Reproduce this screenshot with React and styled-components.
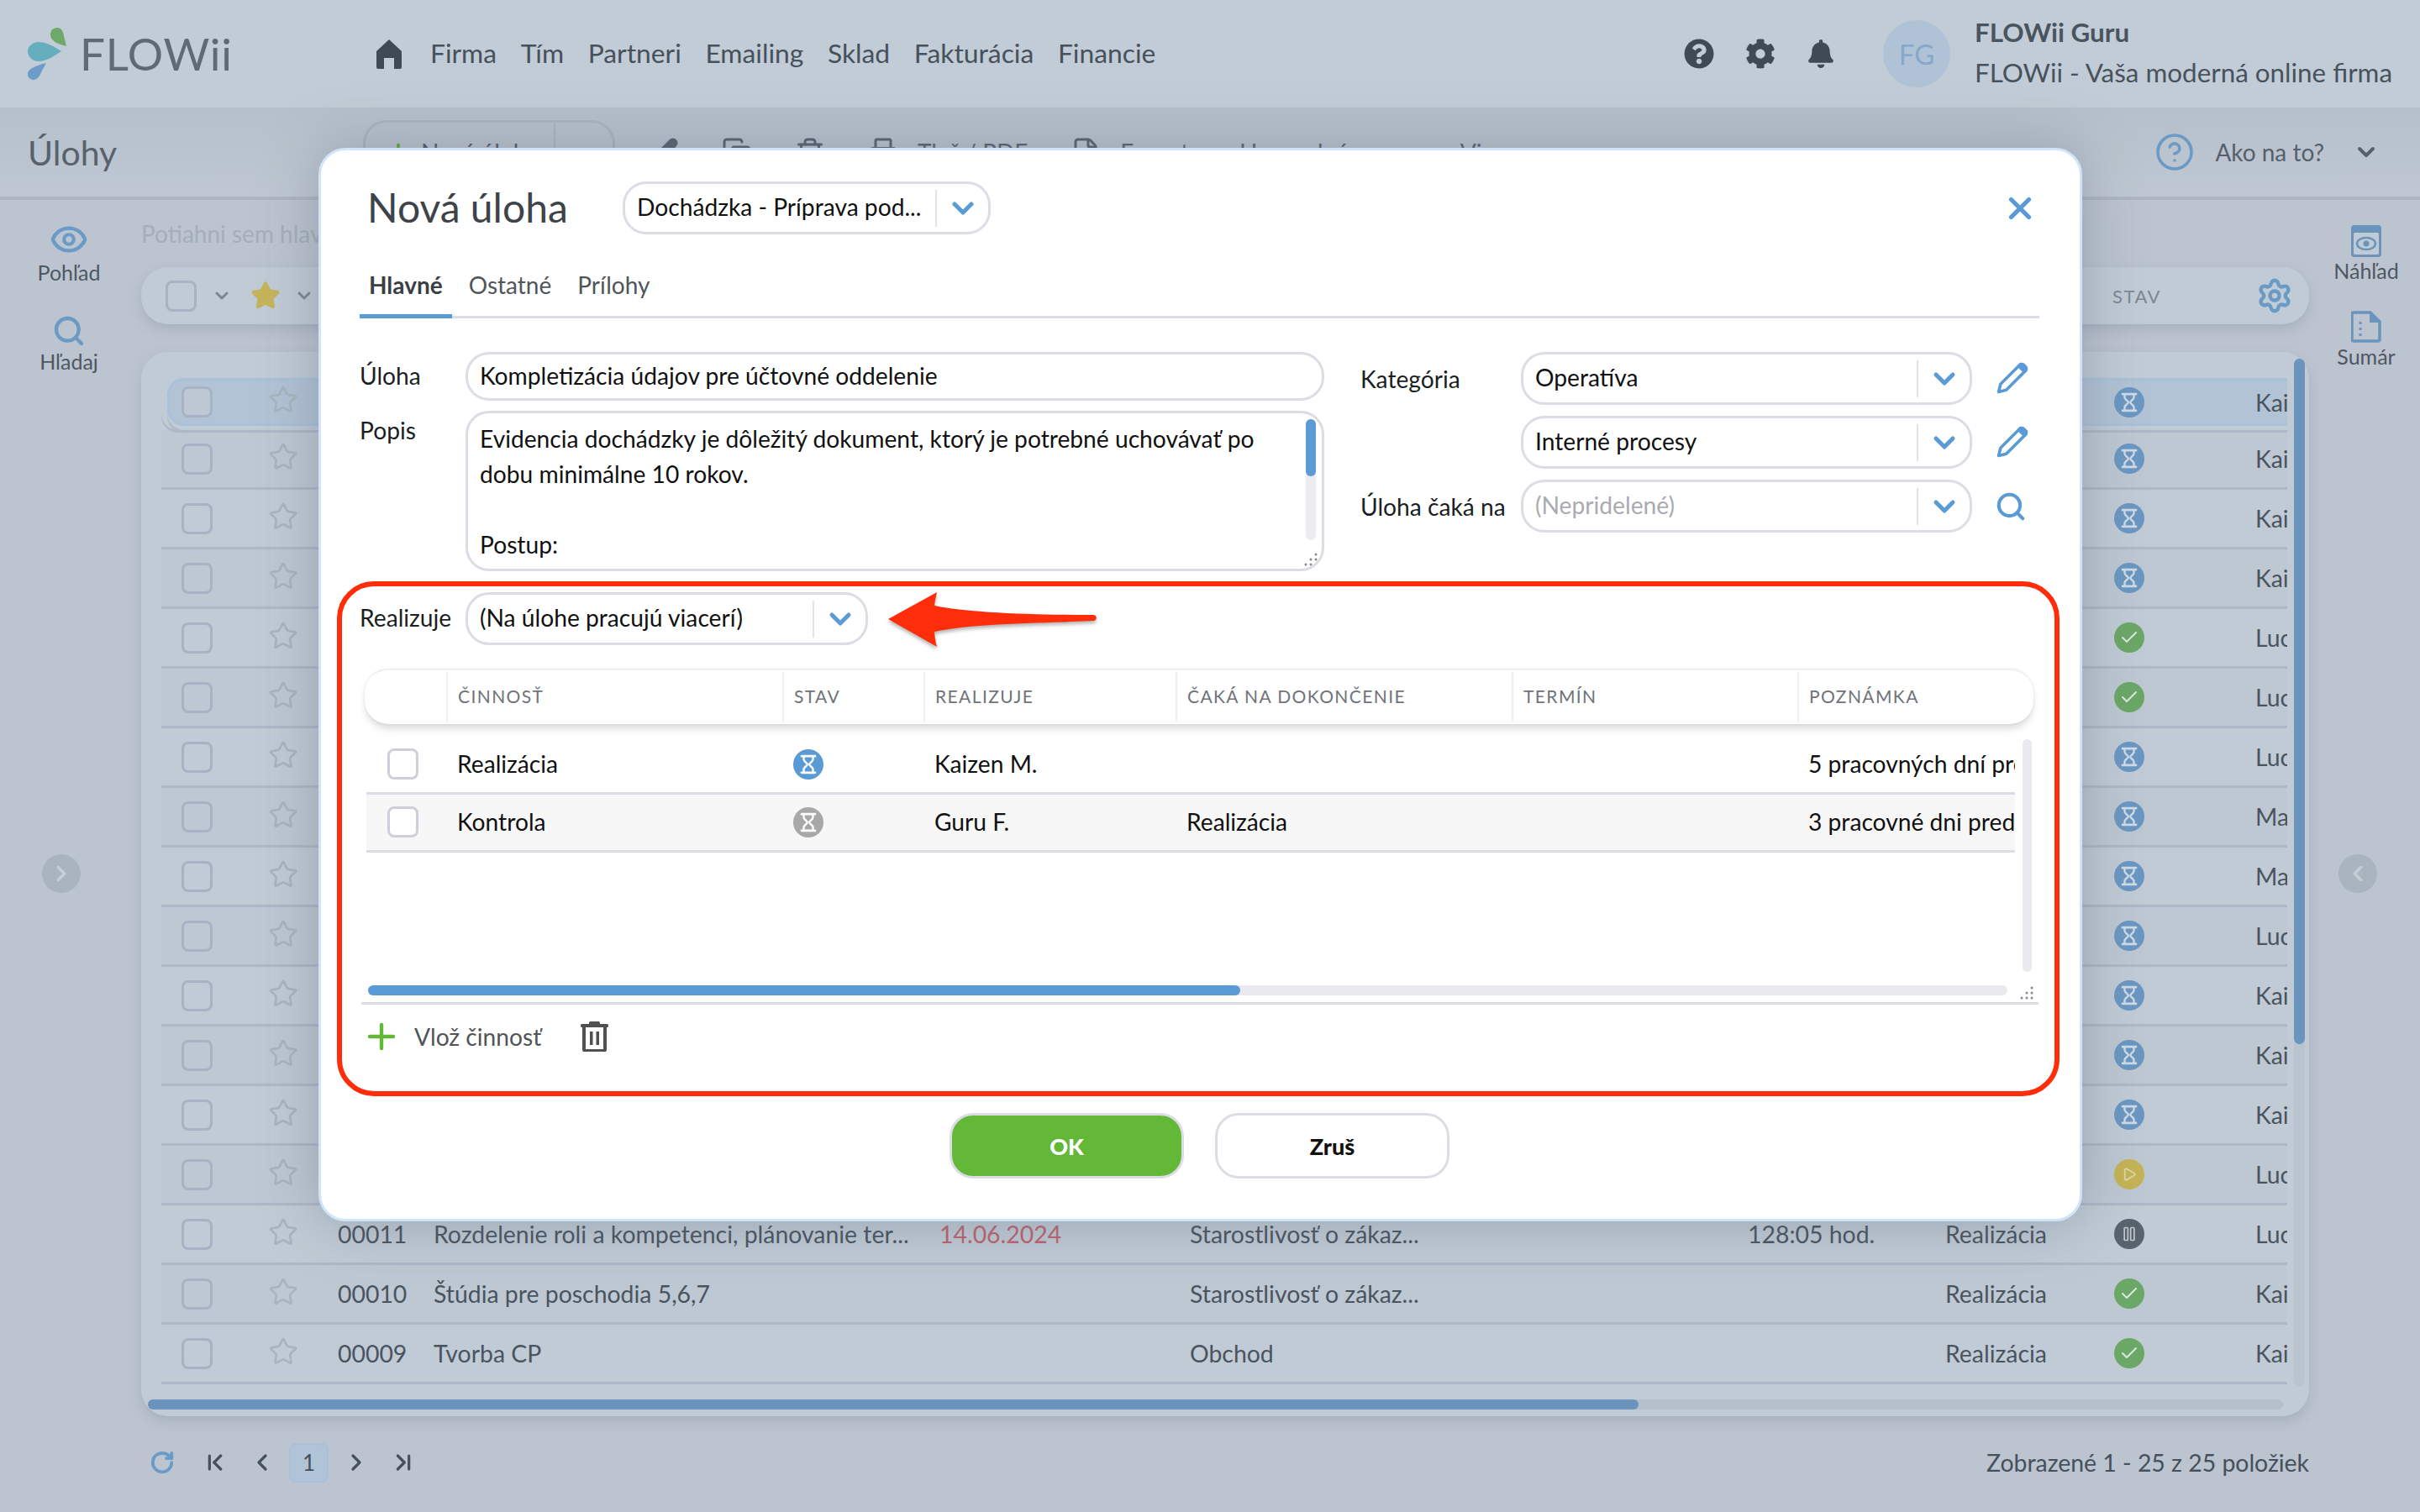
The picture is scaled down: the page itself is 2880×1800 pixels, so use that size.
import React from 'react';
import styled, { createGlobalStyle } from 'styled-components';
import { Eye, Search, Star, ChevronDown, ChevronLeft, ChevronRight, ChevronFirst, ChevronLast, RotateCw, Pencil, X, Plus, Check, Pause, Play, Copy, Trash2, Printer, File, Settings, HelpCircle } from 'lucide-react';
import { FaCog, FaBell, FaQuestionCircle } from 'react-icons/fa';

const FONT = '"Lato", "Noto Sans", sans-serif';

const Global = createGlobalStyle`
  html, body { margin: 0; padding: 0; background: #bdc5d0; }
  * { box-sizing: border-box; }
  body { font-family: ${FONT}; font-size: 29px; }
`;

const Page = styled.div`
  position: relative; width: 2880px; height: 1800px; overflow: hidden;
  background: #bcc4d0; color: #48525d; display: flex; flex-direction: column;
`;
const Header = styled.header`
  height: 128px; flex: none; display: flex; align-items: center; background: #c1ccd6; padding-left: 32px;
`;
const LogoWrap = styled.div`display: flex; align-items: center; width: 415px; gap: 13px;`;
const LogoText = styled.span`font-size: 53px; letter-spacing: 0.7px; color: #5f6a74; line-height: 1; margin-top: -2px;`;
const HomeIcon = styled.svg`width: 32px; height: 36px; fill: #3f4a54; margin-right: 33px;`;
const Nav = styled.nav`display: flex; gap: 28.6px; font-size: 31.8px; color: #47515b; padding-bottom: 3px;`;
const HeadRight = styled.div`margin-left: auto; display: flex; align-items: center; padding-right: 33px;`;
const TopIcons = styled.div`display: flex; gap: 37px; align-items: center; color: #3f4a54; margin-right: 57px;`;
const Avatar = styled.div`
  width: 80px; height: 80px; border-radius: 50%; background: #b0c3d6; color: #84a8cc; font-size: 33px;
  display: flex; align-items: center; justify-content: center; margin-right: 29px;
`;
const UserBlock = styled.div`display: flex; flex-direction: column; gap: 18px; font-size: 31.4px; line-height: 30px; padding-bottom: 4px;`;
const UserName = styled.b`font-weight: 700; color: #4a545e;`;

const SubBar = styled.div`
  height: 110px; flex: none; display: flex; align-items: center; padding: 0 48px 0 33px;
  background: linear-gradient(#b6c0ca, #bfc8d2); border-bottom: 4px solid #adb6c1;
`;
const PageTitle = styled.h1`margin: 0; width: 399px; font-size: 41px; font-weight: 400; color: #58626c;`;
const NewBtn = styled.div`
  width: 300px; height: 76px; border: 3px solid #abb5c0; border-radius: 28px; display: flex; align-items: center;
  padding-left: 24px; gap: 12px; font-size: 28px; color: #4d5866; margin-right: 40px; white-space: nowrap;
`;
const NewBtnSep = styled.i`width: 2px; align-self: stretch; background: #abb5c0; margin-left: auto;`;
const NewBtnChev = styled.span`display: flex; margin: 0 14px;`;
const ToolItem = styled.div`
  display: flex; align-items: center; gap: 23px; font-size: 28px; color: #55606e; margin-right: ${p => p.$mr || 51}px; white-space: nowrap;
`;
const HelpGroup = styled.div`margin-left: auto; display: flex; align-items: center; color: #55606c; font-size: 28px;`;
const HelpLabel = styled.span`margin: 0 34px 0 24px;`;

const Body = styled.div`flex: 1; display: flex; min-height: 0;`;
const LeftRail = styled.aside`
  width: 168px; flex: none; display: flex; flex-direction: column; align-items: center; padding: 24px 4px 0 0; gap: 34px;
`;
const RightRail = styled(LeftRail)`width: 132px; padding: 30px 0 0 4px; gap: 32px;`;
const RailItem = styled.div`
  display: flex; flex-direction: column; align-items: center; font-size: 25px; line-height: 32px; color: #4d5862;
`;
const Center = styled.main`flex: 1; min-width: 0; display: flex; flex-direction: column;`;
const DragHint = styled.div`height: 80px; padding-top: 22px; font-size: 28px; line-height: 36px; color: #a5aeb9;`;
const FilterBar = styled.div`
  height: 68px; flex: none; border-radius: 32px; background: #c0cbd5; box-shadow: 0 6px 14px rgba(120,130,150,.3);
  display: flex; align-items: center; padding: 0 19px 0 29px; color: #7c8690;
`;
const FilterChev = styled.span`display: flex; margin: ${p => p.$m};`;
const Box = styled.span`
  flex: none; width: 37px; height: 37px; border: 3px solid ${p => p.$c || '#a8b2c4'}; border-radius: 8px;
  background: ${p => p.$bg || 'transparent'}; display: block;
`;
const FilterStav = styled.span`margin-left: auto; width: 171px; font-size: 22px; letter-spacing: 1.5px; color: #7d8791;`;
const Card = styled.section`
  position: relative; margin-top: 33px; height: 1267px; flex: none; border-radius: 32px; background: #c0cbd5;
  box-shadow: 0 6px 14px rgba(120,130,150,.3); padding: 22px 24px 0 24px; display: flex; flex-direction: column;
`;
const Rows = styled.div`width: 2530px; flex: none; overflow: hidden;`;
const Row = styled.div`
  height: 71px; display: grid; align-items: center; color: #4a545f; font-size: 28.4px; white-space: nowrap;
  grid-template-columns: 60px 150px 114px 602px 298px 664px 235px 201px 168px 40px;
  border-bottom: 3px solid #aeb7c5; overflow: hidden;
  background: ${p => (p.$even ? '#bdc8d2' : '#c0cbd5')};
`;
const RowHot = styled(Row)`
  position: relative; background: #b2c3d5; border-radius: 20px 0 0 20px; border: 3px solid #a9c1da; border-right: 0;
  height: 57px; margin: 9px 0 5px 7px; grid-template-columns: 50px 150px 114px 602px 298px 664px 235px 201px 168px 40px;
  box-shadow: 0 5px 0 #c0cbd5, 0 8px 0 #aeb7c5, -7px 5px 0 #c0cbd5, -7px 8px 0 #aeb7c5;
`;
const CheckCell = styled.div`padding-left: ${p => (p.$hot ? 14 : 24)}px;`;
const StarCell = styled.div`padding: 0 0 5px 67px; display: flex; color: #a9b4be;`;
const Late = styled.span`color: #bc636c;`;
const Clip = styled.span`overflow: hidden;`;
const Disc = styled.span`
  width: ${p => p.$size || 36}px; height: ${p => p.$size || 36}px; border-radius: 50%; background: ${p => p.$c};
  display: flex; align-items: center; justify-content: center; flex: none;
`;
const HBar = styled.div`height: 12px; margin: 18px 7px 0 -16px; border-radius: 6px; background: #b4bfca; flex: none;`;
const HThumb = styled.div`height: 100%; background: #6a94bb; border-radius: 6px;`;
const VBar = styled.div`
  position: absolute; right: 5px; top: 8px; width: 13px; height: 1223px; background: #b9c4cf; border-radius: 7px;
`;
const VThumb = styled.div`width: 100%; background: #6a94bb; border-radius: 7px;`;
const Pager = styled.footer`
  flex: 1; display: flex; align-items: center; padding: 0 0 4px 1px; color: #46505b; font-size: 28.4px;
`;
const PageBtn = styled.div`width: 47px; height: 47px; display: flex; align-items: center; justify-content: center; margin-right: 9px;`;
const RefreshBtn = styled(PageBtn)`margin-right: 16px;`;
const PageNum = styled(PageBtn)`background: #b1c3d6; border: 2px solid #a9c1da; border-radius: 8px; font-size: 26px;`;
const PagerInfo = styled.span`margin-left: auto;`;
const SideArrow = styled.div`
  position: absolute; top: 1017px; left: ${p => p.$x}px; width: 46px; height: 46px; border-radius: 50%; background: #a9b4bf;
  color: #c3cdd6; display: flex; align-items: center; justify-content: center;
`;

/* modal */
const Backdrop = styled.div`position: absolute; inset: 0; display: flex; align-items: flex-start; padding: 176px 0 0 379px;`;
const Modal = styled.div`
  width: 2099px; height: 1278px; background: #fff; border: 3px solid #cfe4f8; border-radius: 32px; padding: 37px 48px 0 46px;
  display: flex; flex-direction: column; color: #111; font-size: 28.2px; box-shadow: 0 0 70px rgba(95,105,125,.42);
`;
const ModalHead = styled.div`height: 63px; flex: none; display: flex; align-items: center;`;
const ModalTitle = styled.h2`margin: 0 0 3px 9px; width: 304px; font-size: 48px; font-weight: 400; color: #3e4349;`;
const CloseBtn = styled.div`margin-left: auto; margin-right: 2px; color: #5b9bd5; display: flex;`;
const Tabs = styled.div`
  margin-top: 31px; height: 69px; flex: none; display: flex; border-bottom: 3px solid #dcdce4; align-items: stretch;
`;
const Tab = styled.div`
  padding: 0 ${p => (p.$on ? 11 : 0)}px 6px; margin-right: ${p => (p.$on ? 20 : 31)}px; display: flex; align-items: center;
  height: 69px; color: ${p => (p.$on ? '#3a3f45' : '#50555b')}; font-weight: ${p => (p.$on ? 700 : 400)}; font-size: 28px;
  border-bottom: 5px solid ${p => (p.$on ? '#5b9bd5' : 'transparent')};
`;
const FormGrid = styled.div`margin-top: 40px; display: flex; height: 261px; flex: none;`;
const FormLeft = styled.div`width: 1148px; flex: none; display: flex; flex-direction: column; gap: 12px;`;
const FormRight = styled.div`margin-left: 43px; display: flex; flex-direction: column; gap: 13px;`;
const FieldRow = styled.div`display: flex; align-items: ${p => p.$top ? 'flex-start' : 'center'};`;
const Label = styled.label`
  width: ${p => p.$w || 126}px; flex: none; color: #1b1f24; ${p => p.$top && 'padding-top: 6px;'} ${p => p.$lift && 'padding-bottom: 3px;'}
`;
const Input = styled.div`
  flex: 1; height: 58px; border: 3px solid #dcdce4; border-radius: 28px; padding: 0 14px 3px; display: flex; align-items: center;
`;
const TextArea = styled.div`
  position: relative; flex: 1; height: 191px; border: 3px solid #dcdce4; border-radius: 28px; padding: 9px 48px 0 14px;
  line-height: 42px; overflow: hidden;
`;
const AreaBar = styled.div`position: absolute; right: 7px; top: 7px; width: 12px; height: 144px; background: #ebebf0; border-radius: 6px;`;
const AreaThumb = styled.div`height: 68px; background: #5b9bd5; border-radius: 6px;`;
const Grip = styled.svg`position: absolute; right: 4px; bottom: 2px; width: 18px; height: 18px; fill: #888;`;
const SelectBox = styled.div`
  width: ${p => p.$w}px; height: 63px; flex: none; border: 3px solid #dcdce4; border-radius: 28px; display: flex; align-items: center;
  padding: 0 10px 0 14px; color: ${p => (p.$ph ? '#a9abb0' : '#111')};
`;
const SelectText = styled.span`flex: 1; white-space: nowrap; overflow: hidden; padding-bottom: 3px;`;
const SelectSep = styled.i`width: 2px; height: 44px; background: #e2e2e8; margin-right: 11px;`;
const Chev = styled.span`display: flex; color: #5b9bd5;`;
const SideIcon = styled.span`display: flex; color: #5b9bd5; margin-left: 27px;`;

const RedBox = styled.section`
  position: relative; flex: none; width: 2050px; height: 613px; margin: 12px 0 0 -27px; border: 6px solid #ff2d0a; border-radius: 44px;
  padding: 7px 0 0 21px;
`;
const RedArrow = styled.svg`position: absolute; left: 650px; top: 4px; width: 248px; height: 70px; filter: drop-shadow(0 3px 2px rgba(0,0,0,.3));`;
const GridHead = styled.div`
  margin: 28px 0 0 6px; width: 1986px; height: 66px; border-radius: 28px; background: #fff; border-top: 2px solid #f0f0f3;
  box-shadow: 0 7px 10px -2px rgba(60,60,80,.2), 0 0 3px rgba(60,60,80,.1);
  display: grid; grid-template-columns: 97px 400px 168px 300px 400px 340px 1fr; align-items: stretch;
`;
const HeadCell = styled.div`
  font-size: 21px; letter-spacing: 1.4px; color: #6f7379; display: flex; align-items: center; padding: 0 0 3px 12px;
  margin: 2px 0; ${p => p.$sep && 'border-left: 2px solid #f0f0f3;'}
`;
const GridBody = styled.div`margin-top: 15px; height: 280px; display: flex;`;
const GridRows = styled.div`margin-left: 8px; width: 1962px; flex: none; overflow: hidden;`;
const GridRow = styled.div`
  height: 69px; border-bottom: 3px solid #dcdce4; padding-bottom: 1px; white-space: nowrap; color: #111; overflow: hidden;
  display: grid; align-items: center; grid-template-columns: 108px 400px 168px 300px 400px 340px 300px;
  background: ${p => (p.$alt ? '#f7f7f8' : '#fff')};
`;
const GridText = styled.span`padding-bottom: 2px;`;
const GridCheck = styled.div`padding-left: 25px;`;
const GridV = styled.div`margin: 3px 0 0 9px; width: 11px; height: 277px; background: #e9e9ee; border-radius: 6px;`;
const GridH = styled.div`position: relative; display: flex; margin: 16px 0 0 10px; width: 1951px; height: 12px; border-radius: 6px; background: #e9e9ee;`;
const GridHThumb = styled.div`width: 1038px; background: #5b9bd5; border-radius: 6px;`;
const GridGrip = styled(Grip)`right: -32px; bottom: -6px;`;
const GridLine = styled.div`margin: 8px 0 0 2px; width: 1996px; height: 3px; background: #dcdce4;`;
const GridFoot = styled.div`height: 76px; display: flex; align-items: center; padding-left: 2px; color: #515558;`;
const GridAdd = styled.span`display: flex; color: #64b838; margin-right: 15px;`;
const GridTrash = styled.svg`display: block; width: 33px; height: 36px; margin-left: 47px; fill: #505050;`;
const Buttons = styled.div`margin-top: 20px; display: flex; justify-content: center; gap: 37px;`;
const Btn = styled.div`
  width: 279px; height: 78px; border: 3px solid #dcdce4; border-radius: 28px; display: flex; align-items: center; justify-content: center;
  font-weight: 900; font-size: 27px; background: ${p => (p.$ok ? '#64b838' : '#fff')}; color: ${p => (p.$ok ? '#fff' : '#111')};
`;

const Hourglass = ({ c, ink = '#fff' }) => (
  <Disc $c={c}>
    <svg width="36" height="36" viewBox="0 0 36 36" fill="none" stroke={ink}>
      <path d="M10 8.200h16M10 27.800h16" strokeWidth="2.800" strokeLinecap="round" />
      <path d="M12.500 9v3c0 3 4.300 4.200 4.300 6s-4.300 3-4.300 6v3M23.500 9v3c0 3-4.300 4.200-4.300 6s4.300 3 4.300 6v3" strokeWidth="2.400" />
    </svg>
  </Disc>
);
const EditPencil = () => (
  <svg width="41" height="41" viewBox="0 0 36 36" fill="none" stroke="currentColor" strokeWidth="3.200" strokeLinejoin="round">
    <path d="M4 32l2-8L26 4a2.800 2.800 0 0 1 4 0l2 2a2.800 2.800 0 0 1 0 4L12 30z" />
    <path d="M25 5l1-1a2.800 2.800 0 0 1 4 0l2 2a2.800 2.800 0 0 1 0 4l-1 1z" fill="currentColor" />
  </svg>
);
const Status = ({ s }) => {
  if (s === 'h') return <Hourglass c="#6a97c2" ink="#d0dbe5" />;
  if (s === 'c') return <Disc $c="#6ba766"><Check size={24} color="#dce8dc" strokeWidth={2} /></Disc>;
  if (s === 'y') return <Disc $c="#c5b356"><Play size={18} color="#dfd7a6" strokeWidth={2.5} /></Disc>;
  return <Disc $c="#59636e"><Pause size={20} color="#c3c9cf" strokeWidth={2} /></Disc>;
};

const rows = [
  ['', '', '', '', '', '', 'h', 'Kaizen M.'], ['', '', '', '', '', '', 'h', 'Kaizen M.'], ['', '', '', '', '', '', 'h', 'Kaizen M.'],
  ['', '', '', '', '', '', 'h', 'Kaizen M.'], ['', '', '', '', '', '', 'c', 'Lucia K.'], ['', '', '', '', '', '', 'c', 'Lucia K.'],
  ['', '', '', '', '', '', 'h', 'Lucia K.'], ['', '', '', '', '', '', 'h', 'Marek S.'], ['', '', '', '', '', '', 'h', 'Marek S.'],
  ['', '', '', '', '', '', 'h', 'Lucia K.'], ['', '', '', '', '', '', 'h', 'Kaizen M.'], ['', '', '', '', '', '', 'h', 'Kaizen M.'],
  ['', '', '', '', '', '', 'h', 'Kaizen M.'], ['', '', '', '', '', '', 'y', 'Lucia K.'],
  ['00011', 'Rozdelenie roli a kompetenci, plánovanie ter...', '14.06.2024', 'Starostlivosť o zákaz...', '128:05 hod.', 'Realizácia', 'p', 'Lucia K.'],
  ['00010', 'Štúdia pre poschodia 5,6,7', '', 'Starostlivosť o zákaz...', '', 'Realizácia', 'c', 'Kaizen M.'],
  ['00009', 'Tvorba CP', '', 'Obchod', '', 'Realizácia', 'c', 'Kaizen M.'],
];

const BgRow = ({ r, i }) => {
  const Comp = i === 0 ? RowHot : Row;
  return (
    <Comp $even={i % 2 === 1}>
      <CheckCell $hot={i === 0}><Box $bg={i === 0 ? '#bdc8d4' : undefined} /></CheckCell>
      <StarCell><Star size={36} strokeWidth={1.8} /></StarCell>
      <span>{r[0]}</span>
      <span>{r[1]}</span>
      <Late>{r[2]}</Late>
      <span>{r[3]}</span>
      <span>{r[4]}</span>
      <span>{r[5]}</span>
      <Status s={r[6]} />
      <Clip>{r[7]}</Clip>
    </Comp>
  );
};

const Select = ({ w, children, ph }) => (
  <SelectBox $w={w} $ph={ph}>
    <SelectText>{children}</SelectText>
    <SelectSep />
    <Chev><ChevronDown size={40} strokeWidth={3} /></Chev>
  </SelectBox>
);
const GripDots = ({ as: C = Grip }) => (
  <C viewBox="0 0 18 18">
    {[[15, 3], [15, 9], [9, 9], [15, 15], [9, 15], [3, 15]].map(([x, y]) => <circle key={x + '-' + y} cx={x} cy={y} r="1.5" />)}
  </C>
);

export default function App() {
  return (
    <>
      <Global />
      <Page>
        <Header>
          <LogoWrap>
            <svg width="50" height="64" viewBox="0 0 50 64">
              <path fill="#6ea96b" d="M47 23C40 21 28 18 28 9c0-6 5-8 8-8 6 0 8 7 8 10z" />
              <path fill="#64aebd" d="M41 29C33 24 24 18 14 18 6 18 1 24 1 29c0 6 5 12 13 12 10 0 19-7 27-12z" />
              <path fill="#6e9cc8" d="M23 43C15 45 1 49 1 56c0 5 4 7 7 7 6 0 8-7 10-11z" />
            </svg>
            <LogoText>FLOWii</LogoText>
          </LogoWrap>
          <HomeIcon viewBox="0 0 32 36"><path d="M16 1 31 15v19a2 2 0 0 1-2 2h-7V23H10v13H3a2 2 0 0 1-2-2V15z" /></HomeIcon>
          <Nav>
            {['Firma', 'Tím', 'Partneri', 'Emailing', 'Sklad', 'Fakturácia', 'Financie'].map(t => <span key={t}>{t}</span>)}
          </Nav>
          <HeadRight>
            <TopIcons>
              <FaQuestionCircle size={36} />
              <FaCog size={36} />
              <FaBell size={34} />
            </TopIcons>
            <Avatar>FG</Avatar>
            <UserBlock>
              <UserName>FLOWii Guru</UserName>
              <span>FLOWii - Vaša moderná online firma</span>
            </UserBlock>
          </HeadRight>
        </Header>
        <SubBar>
          <PageTitle>Úlohy</PageTitle>
          <NewBtn><Plus size={30} color="#64a83c" strokeWidth={3} />Nová úloha<NewBtnSep /><NewBtnChev><ChevronDown size={28} /></NewBtnChev></NewBtn>
          <ToolItem><Pencil size={36} fill="#55606e" /></ToolItem>
          <ToolItem><Copy size={36} /></ToolItem>
          <ToolItem><Trash2 size={36} /></ToolItem>
          <ToolItem><Printer size={36} />Tlač / PDF</ToolItem>
          <ToolItem $mr={60}><File size={36} />Export</ToolItem>
          <ToolItem $mr={84}>Hromadné<ChevronDown size={26} /></ToolItem>
          <ToolItem>Viac<ChevronDown size={26} /></ToolItem>
          <HelpGroup>
            <HelpCircle size={48} color="#6a9ac6" strokeWidth={1.8} />
            <HelpLabel>Ako na to?</HelpLabel>
            <ChevronDown size={32} strokeWidth={3} />
          </HelpGroup>
        </SubBar>
        <Body>
          <LeftRail>
            <RailItem><Eye size={46} color="#6a9ac6" strokeWidth={2.2} />Pohľad</RailItem>
            <RailItem><Search size={40} color="#6a9ac6" strokeWidth={2.6} />Hľadaj</RailItem>
          </LeftRail>
          <Center>
            <DragHint>Potiahni sem hlavičku stĺpca pre zoskupenie</DragHint>
            <FilterBar>
              <Box />
              <FilterChev $m="0 22px 0 18px"><ChevronDown size={24} strokeWidth={3} /></FilterChev>
              <Star size={36} fill="#c5b45a" color="#c5b45a" />
              <FilterChev $m="0 0 0 16px"><ChevronDown size={24} strokeWidth={3} /></FilterChev>
              <FilterStav>STAV</FilterStav>
              <Settings size={44} color="#6a9ac6" strokeWidth={2.4} />
            </FilterBar>
            <Card>
              <Rows>{rows.map((r, i) => <BgRow key={i} r={r} i={i} />)}</Rows>
              <HBar><HThumb style={{ width: 1774 }} /></HBar>
              <VBar><VThumb style={{ height: 816 }} /></VBar>
            </Card>
            <Pager>
              <RefreshBtn><RotateCw size={30} color="#6a9ac6" strokeWidth={3} /></RefreshBtn>
              <PageBtn><ChevronFirst size={32} strokeWidth={2.4} /></PageBtn>
              <PageBtn><ChevronLeft size={32} strokeWidth={2.4} /></PageBtn>
              <PageNum>1</PageNum>
              <PageBtn><ChevronRight size={32} strokeWidth={2.4} /></PageBtn>
              <PageBtn><ChevronLast size={32} strokeWidth={2.4} /></PageBtn>
              <PagerInfo>Zobrazené 1 - 25 z 25 položiek</PagerInfo>
            </Pager>
          </Center>
          <RightRail>
            <RailItem>
              <svg width="36" height="38" viewBox="0 0 36 38">
                <path fill="#6a94bb" d="M4 0h28a4 4 0 0 1 4 4v30a4 4 0 0 1-4 4H4a4 4 0 0 1-4-4V4a4 4 0 0 1 4-4z" />
                <rect x="3" y="9" width="30" height="26" rx="2" fill="#c0cbd5" />
                <ellipse cx="18" cy="22" rx="11" ry="7" fill="none" stroke="#6a94bb" strokeWidth="2.500" />
                <circle cx="18" cy="22" r="3.500" fill="#6a94bb" />
              </svg>
              Náhľad
            </RailItem>
            <RailItem>
              <svg width="36" height="38" viewBox="0 0 36 38">
                <path d="M3 2h20l11 11v21a2 2 0 0 1-2 2H3a2 2 0 0 1-2-2V4a2 2 0 0 1 2-2z" fill="none" stroke="#6a94bb" strokeWidth="3.500" />
                <path d="M23 2v11h11" fill="#6a94bb" stroke="#6a94bb" strokeWidth="2" />
                <path d="M11 13v3M11 20v3M11 27v3" stroke="#6a94bb" strokeWidth="3" />
              </svg>
              Sumár
            </RailItem>
          </RightRail>
        </Body>
        <SideArrow $x={50}><ChevronRight size={30} strokeWidth={3} /></SideArrow>
        <SideArrow $x={2783}><ChevronLeft size={30} strokeWidth={3} /></SideArrow>

        <Backdrop>
          <Modal>
            <ModalHead>
              <ModalTitle>Nová úloha</ModalTitle>
              <Select w={438}>Dochádzka - Príprava pod...</Select>
              <CloseBtn><X size={42} strokeWidth={3} /></CloseBtn>
            </ModalHead>
            <Tabs>
              <Tab $on>Hlavné</Tab>
              <Tab>Ostatné</Tab>
              <Tab>Prílohy</Tab>
            </Tabs>
            <FormGrid>
              <FormLeft>
                <FieldRow>
                  <Label $lift>Úloha</Label>
                  <Input>Kompletizácia údajov pre účtovné oddelenie</Input>
                </FieldRow>
                <FieldRow $top>
                  <Label $top>Popis</Label>
                  <TextArea>
                    Evidencia dochádzky je dôležitý dokument, ktorý je potrebné uchovávať po<br />
                    dobu minimálne 10 rokov.<br /><br />
                    Postup:
                    <AreaBar><AreaThumb /></AreaBar>
                    <GripDots />
                  </TextArea>
                </FieldRow>
              </FormLeft>
              <FormRight>
                <FieldRow>
                  <Label $w={191}>Kategória</Label>
                  <Select w={537}>Operatíva</Select>
                  <SideIcon><EditPencil /></SideIcon>
                </FieldRow>
                <FieldRow>
                  <Label $w={191} />
                  <Select w={537}>Interné procesy</Select>
                  <SideIcon><EditPencil /></SideIcon>
                </FieldRow>
                <FieldRow>
                  <Label $w={191}>Úloha čaká na</Label>
                  <Select w={537} ph>(Nepridelené)</Select>
                  <SideIcon><Search size={38} strokeWidth={2.6} /></SideIcon>
                </FieldRow>
              </FormRight>
            </FormGrid>
            <RedBox>
              <FieldRow>
                <Label $lift>Realizuje</Label>
                <Select w={479}>(Na úlohe pracujú viacerí)</Select>
              </FieldRow>
              <RedArrow viewBox="0 0 252 70" preserveAspectRatio="none">
                <path fill="#ff2d0a" d="M0 35 59 3C57 12 56 16 56 19 100 28 180 30 248 30c5 0 5 7 0 7C180 40 100 40 56 50c0 5 1 10 3 18z" />
              </RedArrow>
              <GridHead>
                <HeadCell />
                <HeadCell $sep>ČINNOSŤ</HeadCell>
                <HeadCell $sep>STAV</HeadCell>
                <HeadCell $sep>REALIZUJE</HeadCell>
                <HeadCell $sep>ČAKÁ NA DOKONČENIE</HeadCell>
                <HeadCell $sep>TERMÍN</HeadCell>
                <HeadCell $sep>POZNÁMKA</HeadCell>
              </GridHead>
              <GridBody>
                <GridRows>
                  <GridRow>
                    <GridCheck><Box $c="#cfcfdc" /></GridCheck>
                    <GridText>Realizácia</GridText>
                    <Hourglass c="#5b9bd5" />
                    <GridText>Kaizen M.</GridText>
                    <span />
                    <span />
                    <GridText>5 pracovných dní pred termínom</GridText>
                  </GridRow>
                  <GridRow $alt>
                    <GridCheck><Box $c="#cfcfdc" $bg="#fff" /></GridCheck>
                    <GridText>Kontrola</GridText>
                    <Hourglass c="#a8a8a8" />
                    <GridText>Guru F.</GridText>
                    <GridText>Realizácia</GridText>
                    <span />
                    <GridText>3 pracovné dni pred termínom</GridText>
                  </GridRow>
                </GridRows>
                <GridV />
              </GridBody>
              <GridH>
                <GridHThumb />
                <GripDots as={GridGrip} />
              </GridH>
              <GridLine />
              <GridFoot>
                <GridAdd><Plus size={48} strokeWidth={2.2} /></GridAdd>
                Vlož činnosť
                <GridTrash viewBox="0 0 33 36">
                  <rect x="0" y="3" width="33" height="4" rx="1.500" />
                  <rect x="10" y="0" width="13" height="5" rx="1.500" />
                  <path d="M4 7v26a2 2 0 0 0 2 2h21a2 2 0 0 0 2-2V7" fill="none" stroke="#505050" strokeWidth="4" />
                  <rect x="11" y="12" width="3.500" height="16" />
                  <rect x="18.500" y="12" width="3.500" height="16" />
                </GridTrash>
              </GridFoot>
            </RedBox>
            <Buttons>
              <Btn $ok>OK</Btn>
              <Btn>Zruš</Btn>
            </Buttons>
          </Modal>
        </Backdrop>
      </Page>
    </>
  );
}
